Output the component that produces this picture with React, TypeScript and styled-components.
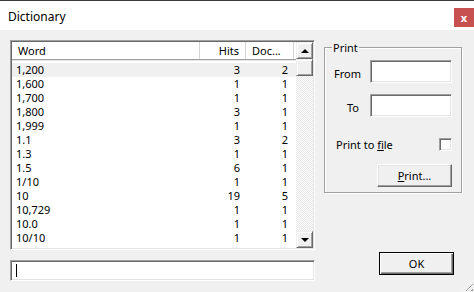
import styled, { createGlobalStyle } from "styled-components";

const GlobalStyle = createGlobalStyle`
  html, body {
    margin: 0;
    padding: 0;
    background: #f0f0f0;
  }
  body {
    font-family: "Noto Sans", "Liberation Sans", sans-serif;
    font-size: 11px;
    color: #000;
  }
`;

const Window = styled.div`
  width: 474px;
  height: 292px;
  display: flex;
  flex-direction: column;
  background: #f0f0f0;
  border-top: 1px solid #3c3c3c;
  box-sizing: border-box;
  position: relative;
  overflow: hidden;
`;

const TitleBar = styled.div`
  height: 29px;
  background: #fff;
  display: flex;
  align-items: center;
  justify-content: space-between;
  padding-left: 8px;
`;

const Title = styled.span`
  font-size: 12px;
  margin-top: 1px;
`;

const CloseButton = styled.div`
  width: 20px;
  height: 19px;
  align-self: flex-start;
  margin-top: 7px;
  background: #c75050;
  color: #fff;
  font-weight: bold;
  font-size: 11px;
  display: flex;
  align-items: center;
  justify-content: center;
`;

const Body = styled.div`
  flex: 1;
  display: flex;
  padding: 10px 12px 0 10px;
  gap: 9px;
`;

const LeftColumn = styled.div`
  width: 305px;
  display: flex;
  flex-direction: column;
  gap: 10px;
`;

const ListBox = styled.div`
  height: 206px;
  display: flex;
  border-top: 1px solid #a0a0a0;
  border-left: 1px solid #a0a0a0;
  border-right: 1px solid #fff;
  border-bottom: 1px solid #fff;
  box-shadow: inset 1px 1px 0 #696969, inset -1px -1px 0 #e3e3e3;
  background: #fff;
  padding: 1px;
`;

const ListContent = styled.div`
  flex: 1;
  display: flex;
  flex-direction: column;
  overflow: hidden;
`;

const HeaderRow = styled.div`
  display: grid;
  grid-template-columns: 188px 46px 48px;
  height: 17px;
  border-bottom: 1px solid #a0a0a0;
  box-shadow: 0 1px 0 #e5e5e5;
  margin-bottom: 3px;
`;

const HeaderCell = styled.div<{ $align?: "left" | "right" }>`
  border-right: 1px solid #d5d5d5;
  display: flex;
  align-items: center;
  justify-content: ${(p) => (p.$align === "right" ? "flex-end" : "flex-start")};
  padding: 0 6px;
  white-space: nowrap;
`;

const Row = styled.div<{ $selected?: boolean }>`
  display: grid;
  grid-template-columns: 188px 46px 48px;
  height: 14px;
  line-height: 14px;
  background: ${(p) => (p.$selected ? "#f0f0f0" : "transparent")};
`;

const Cell = styled.div<{ $align?: "left" | "right" }>`
  text-align: ${(p) => p.$align ?? "left"};
  padding: ${(p) => (p.$align === "right" ? "0 6px 0 0" : "0 0 0 4px")};
`;

const ScrollBar = styled.div`
  width: 17px;
  display: flex;
  flex-direction: column;
  background: repeating-conic-gradient(#fff 0 25%, #e6e6e6 0 50%) 0 0 / 2px 2px;
`;

const ScrollButton = styled.div`
  height: 17px;
  box-sizing: border-box;
  background: #f0f0f0;
  border-top: 1px solid #f0f0f0;
  border-left: 1px solid #f0f0f0;
  border-right: 1px solid #696969;
  border-bottom: 1px solid #696969;
  box-shadow: inset 1px 1px 0 #fff, inset -1px -1px 0 #a0a0a0;
  display: flex;
  align-items: center;
  justify-content: center;
`;

const Track = styled.div`
  flex: 1;
`;

const Arrow = styled.div<{ $down?: boolean }>`
  width: 0;
  height: 0;
  border-left: 4px solid transparent;
  border-right: 4px solid transparent;
  ${(p) =>
    p.$down ? "border-top: 4px solid #000;" : "border-bottom: 4px solid #000;"}
`;

const EditBox = styled.div`
  height: 21px;
  box-sizing: border-box;
  background: #fff;
  border-top: 1px solid #a0a0a0;
  border-left: 1px solid #a0a0a0;
  border-right: 1px solid #fff;
  border-bottom: 1px solid #fff;
  box-shadow: inset 1px 1px 0 #696969, inset -1px -1px 0 #e3e3e3;
  display: flex;
  align-items: center;
  padding-left: 5px;
`;

const Caret = styled.div`
  width: 1px;
  height: 13px;
  background: #000;
`;

const RightColumn = styled.div`
  width: 138px;
  display: flex;
  flex-direction: column;
  align-items: stretch;
`;

const GroupBox = styled.fieldset`
  margin: 0;
  padding: 5px 9px 4px 9px;
  border: 1px solid #a0a0a0;
  box-shadow: inset 1px 1px 0 #fff, 1px 1px 0 #fff;
  height: 153px;
  box-sizing: border-box;
  display: flex;
  flex-direction: column;
`;

const Legend = styled.legend`
  padding: 0 1px;
  margin-left: -2px;
  font-size: 11px;
`;

const FieldRow = styled.div`
  display: flex;
  align-items: center;
  justify-content: space-between;
  height: 23px;
  margin-bottom: 11px;
`;

const FieldLabel = styled.span<{ $indent?: number }>`
  padding-left: ${(p) => p.$indent ?? 0}px;
  margin-top: 4px;
`;

const TextInput = styled.div`
  width: 82px;
  height: 23px;
  box-sizing: border-box;
  background: #fff;
  border-top: 1px solid #a0a0a0;
  border-left: 1px solid #a0a0a0;
  border-right: 1px solid #fff;
  border-bottom: 1px solid #fff;
  box-shadow: inset 1px 1px 0 #696969, inset -1px -1px 0 #e3e3e3;
`;

const CheckRow = styled.div`
  display: flex;
  align-items: center;
  justify-content: space-between;
  margin-top: 9px;
  height: 14px;
  padding-left: 2px;
`;

const CheckBox = styled.div`
  width: 13px;
  height: 13px;
  box-sizing: border-box;
  background: #fff;
  border-top: 1px solid #a0a0a0;
  border-left: 1px solid #a0a0a0;
  border-right: 1px solid #fff;
  border-bottom: 1px solid #fff;
  box-shadow: inset 1px 1px 0 #696969, inset -1px -1px 0 #e3e3e3;
`;

const Button = styled.div`
  width: 75px;
  height: 23px;
  box-sizing: border-box;
  background: #f0f0f0;
  border-top: 1px solid #fff;
  border-left: 1px solid #fff;
  border-right: 1px solid #696969;
  border-bottom: 1px solid #696969;
  box-shadow: inset -1px -1px 0 #a0a0a0, inset 1px 1px 0 #e3e3e3;
  display: flex;
  align-items: center;
  justify-content: center;
  align-self: flex-end;
`;

const PrintButton = styled(Button)`
  margin-top: 13px;
`;

const OkButton = styled(Button)`
  margin-top: 59px;
  margin-right: 8px;
  border: 1px solid #000;
  box-shadow: inset 1px 1px 0 #fff, inset -1px -1px 0 #696969, inset -2px -2px 0 #a0a0a0;
`;

const Grip = styled.div`
  position: absolute;
  right: 1px;
  bottom: 1px;
  width: 11px;
  height: 11px;
  background: repeating-linear-gradient(
    135deg,
    transparent 0 2px,
    #a0a0a0 2px 3px,
    #fff 3px 4px
  );
  clip-path: polygon(100% 0, 100% 100%, 0 100%);
`;

const rows = [
  ["1,200", "3", "2"],
  ["1,600", "1", "1"],
  ["1,700", "1", "1"],
  ["1,800", "3", "1"],
  ["1,999", "1", "1"],
  ["1.1", "3", "2"],
  ["1.3", "1", "1"],
  ["1.5", "6", "1"],
  ["1/10", "1", "1"],
  ["10", "19", "5"],
  ["10,729", "1", "1"],
  ["10.0", "1", "1"],
  ["10/10", "1", "1"],
];

export default function App() {
  return (
    <Window>
      <GlobalStyle />
      <TitleBar>
        <Title>Dictionary</Title>
        <CloseButton>x</CloseButton>
      </TitleBar>
      <Body>
        <LeftColumn>
          <ListBox>
            <ListContent>
              <HeaderRow>
                <HeaderCell>Word</HeaderCell>
                <HeaderCell $align="right">Hits</HeaderCell>
                <HeaderCell>Doc...</HeaderCell>
              </HeaderRow>
              {rows.map(([word, hits, docs], i) => (
                <Row key={word} $selected={i === 0}>
                  <Cell>{word}</Cell>
                  <Cell $align="right">{hits}</Cell>
                  <Cell $align="right">{docs}</Cell>
                </Row>
              ))}
            </ListContent>
            <ScrollBar>
              <ScrollButton>
                <Arrow />
              </ScrollButton>
              <ScrollButton />
              <Track />
              <ScrollButton>
                <Arrow $down />
              </ScrollButton>
            </ScrollBar>
          </ListBox>
          <EditBox>
            <Caret />
          </EditBox>
        </LeftColumn>
        <RightColumn>
          <GroupBox>
            <Legend>Print</Legend>
            <FieldRow>
              <FieldLabel>From</FieldLabel>
              <TextInput />
            </FieldRow>
            <FieldRow>
              <FieldLabel $indent={13}>To</FieldLabel>
              <TextInput />
            </FieldRow>
            <CheckRow>
              <span>
                Print to <u>f</u>ile
              </span>
              <CheckBox />
            </CheckRow>
            <PrintButton>
              <span>
                <u>P</u>rint...
              </span>
            </PrintButton>
          </GroupBox>
          <OkButton>OK</OkButton>
        </RightColumn>
      </Body>
      <Grip />
    </Window>
  );
}
